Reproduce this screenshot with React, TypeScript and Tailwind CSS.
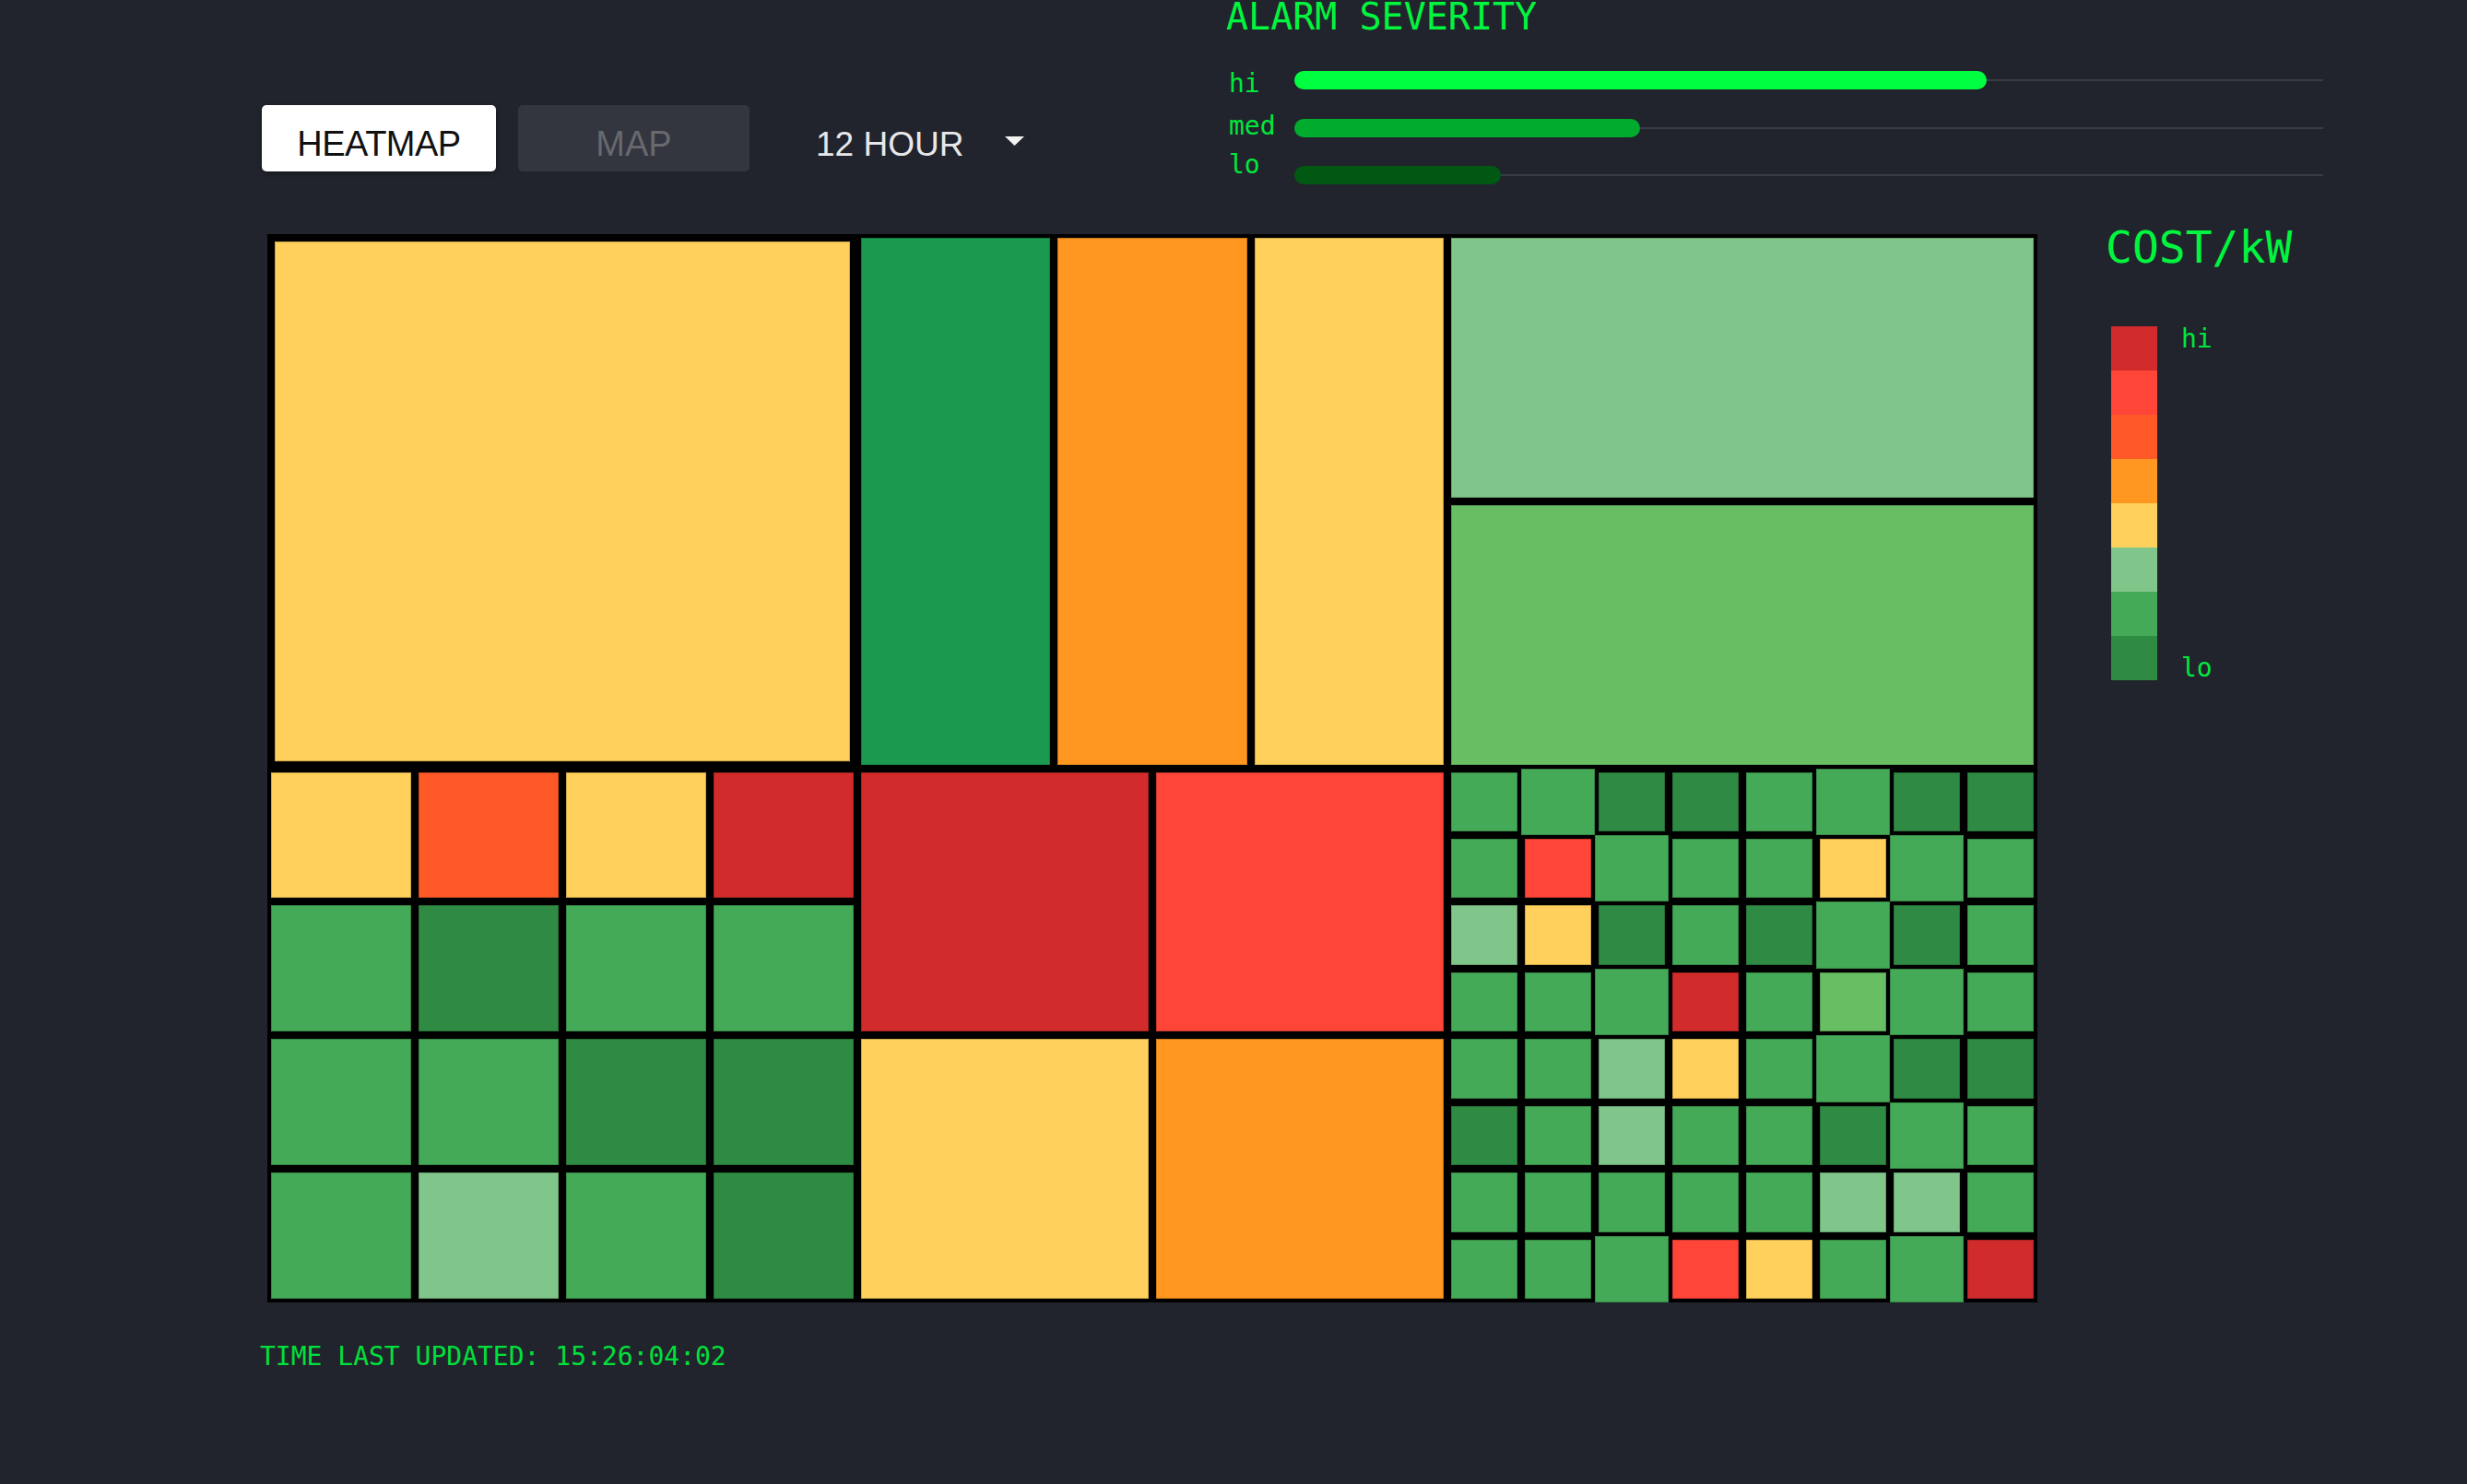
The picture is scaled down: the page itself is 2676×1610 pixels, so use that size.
import React from "react";

type K = "DR" | "R" | "OR" | "O" | "Y" | "LG" | "G" | "DG" | "MG" | "TG";

const BG: Record<K, string> = {
  DR: "bg-[#d22b2b]",
  R: "bg-[#ff4538]",
  OR: "bg-[#ff5927]",
  O: "bg-[#ff961f]",
  Y: "bg-[#ffd05b]",
  LG: "bg-[#80c589]",
  G: "bg-[#44aa57]",
  DG: "bg-[#2f8b44]",
  MG: "bg-[#68be63]",
  TG: "bg-[#1b9a4f]",
};

const MONO = "font-['DejaVu_Sans_Mono',monospace]";
const SANS = "font-['Liberation_Sans',Arial,sans-serif]";

function Leaf({ c, big = false, inset = "p-[4px]" }: { c: K; big?: boolean; inset?: string }) {
  return (
    <div className={`min-h-0 min-w-0 ${big ? "p-0" : inset}`}>
      <div className={`h-full w-full border border-black/20 ${BG[c]}`} />
    </div>
  );
}

// 8x8 grid: [color, big]
const GRID8: [K, boolean][][] = [
  [["G", false], ["G", true], ["DG", false], ["DG", false], ["G", false], ["G", true], ["DG", false], ["DG", false]],
  [["G", false], ["R", false], ["G", true], ["G", false], ["G", false], ["Y", false], ["G", true], ["G", false]],
  [["LG", false], ["Y", false], ["DG", false], ["G", false], ["DG", false], ["G", true], ["DG", false], ["G", false]],
  [["G", false], ["G", false], ["G", true], ["DR", false], ["G", false], ["MG", false], ["G", true], ["G", false]],
  [["G", false], ["G", false], ["LG", false], ["Y", false], ["G", false], ["G", true], ["DG", false], ["DG", false]],
  [["DG", false], ["G", false], ["LG", false], ["G", false], ["G", false], ["DG", false], ["G", true], ["G", false]],
  [["G", false], ["G", false], ["G", false], ["G", false], ["G", false], ["LG", false], ["LG", false], ["G", false]],
  [["G", false], ["G", false], ["G", true], ["R", false], ["Y", false], ["G", false], ["G", true], ["DR", false]],
];

const GRID4: K[][] = [
  ["Y", "OR", "Y", "DR"],
  ["G", "DG", "G", "G"],
  ["G", "G", "DG", "DG"],
  ["G", "LG", "G", "DG"],
];

const LEGEND: K[] = ["DR", "R", "OR", "O", "Y", "LG", "G", "DG"];

function Treemap() {
  return (
    <div className="grid h-[1159px] w-[1920px] shrink-0 grid-cols-3 grid-rows-2 bg-black">
      {/* top-left */}
      <Leaf c="Y" inset="p-[8px]" />
      {/* top-middle */}
      <div className="grid min-h-0 grid-cols-3">
        <Leaf c="TG" />
        <Leaf c="O" />
        <Leaf c="Y" />
      </div>
      {/* top-right */}
      <div className="grid min-h-0 grid-rows-2">
        <Leaf c="LG" />
        <Leaf c="MG" />
      </div>
      {/* bottom-left 4x4 */}
      <div className="grid min-h-0 grid-cols-4 grid-rows-4">
        {GRID4.flat().map((c, i) => (
          <Leaf key={i} c={c} />
        ))}
      </div>
      {/* bottom-middle 2x2 */}
      <div className="grid min-h-0 grid-cols-2 grid-rows-2">
        <Leaf c="DR" />
        <Leaf c="R" />
        <Leaf c="Y" />
        <Leaf c="O" />
      </div>
      {/* bottom-right 8x8 */}
      <div className="grid min-h-0 grid-cols-8 grid-rows-8">
        {GRID8.flat().map(([c, big], i) => (
          <Leaf key={i} c={c} big={big} />
        ))}
      </div>
    </div>
  );
}

function Bar({ label, width, color, labelCls }: { label: string; width: number; color: string; labelCls: string }) {
  return (
    <div className="flex h-[20px] items-center">
      <div className={`ml-[3px] w-[71px] shrink-0 text-[28px] leading-none text-[#00e83e] ${MONO} ${labelCls}`}>{label}</div>
      <div className="relative flex h-[20px] w-[1116px] items-center">
        <div className="h-[2px] w-full bg-[#393c44]" />
        <div className={`absolute left-0 top-0 h-[20px] rounded-full ${color}`} style={{ width }} />
      </div>
    </div>
  );
}

export default function App() {
  return (
    <div className="h-[1610px] w-[2676px] overflow-hidden bg-[#21242c]">
      {/* header */}
      <div className="flex h-[254px] pl-[284px]">
        <div className="flex w-[1046px] shrink-0 items-start pt-[114px]">
          <button className={`flex h-[72px] w-[254px] items-center justify-center rounded-[5px] bg-white pt-[12px] text-[38px] leading-none tracking-[-0.5px] text-[#111] shadow-[0_2px_6px_rgba(0,0,0,0.35)] ${SANS}`}>
            HEATMAP
          </button>
          <button className={`ml-[24px] flex h-[72px] w-[251px] items-center justify-center rounded-[5px] bg-[#33363e] pt-[12px] text-[38px] leading-none text-[#67696f] ${SANS}`}>
            MAP
          </button>
          <div className={`ml-[72px] flex h-[72px] items-center pt-[12px] text-[37px] leading-none text-[#e8e8ea] ${SANS}`}>
            12 HOUR
          </div>
          <div className="ml-[45px] flex h-[72px] items-start pt-[34px]">
            <svg width="21" height="10" viewBox="0 0 21 10">
              <polygon points="0,0 21,0 10.5,10" fill="#f2f2f2" />
            </svg>
          </div>
        </div>
        <div className="flex w-[1191px] shrink-0 flex-col">
          <div className={`mt-[-2px] text-[40px] leading-none text-[#00f53f] ${MONO}`}>ALARM SEVERITY</div>
          <div className="mt-[39px]">
            <Bar label="hi" width={751} color="bg-[#00ff41]" labelCls="mt-[8px]" />
          </div>
          <div className="mt-[32px]">
            <Bar label="med" width={375} color="bg-[#00ab2e]" labelCls="mb-[4px]" />
          </div>
          <div className="mt-[31px]">
            <Bar label="lo" width={224} color="bg-[#005812]" labelCls="mb-[22px]" />
          </div>
        </div>
      </div>

      {/* treemap + legend */}
      <div className="flex items-start pl-[290px]">
        <Treemap />
        <div className="ml-[74px] mt-[-10px] flex flex-col">
          <div className={`text-[48px] leading-none text-[#00f53f] ${MONO}`}>COST/kW</div>
          <div className="ml-[6px] mt-[62px] flex">
            <div className="flex w-[50px] flex-col">
              {LEGEND.map((c) => (
                <div key={c} className={`h-[48px] ${BG[c]}`} />
              ))}
            </div>
            <div className={`ml-[26px] flex h-[385px] flex-col justify-between text-[28px] leading-none text-[#00e83e] ${MONO}`}>
              <span>hi</span>
              <span>lo</span>
            </div>
          </div>
        </div>
      </div>

      {/* footer */}
      <div className={`mt-[45px] pl-[282px] text-[28px] leading-none text-[#00e03c] ${MONO}`}>
        TIME LAST UPDATED: 15:26:04:02
      </div>
    </div>
  );
}
